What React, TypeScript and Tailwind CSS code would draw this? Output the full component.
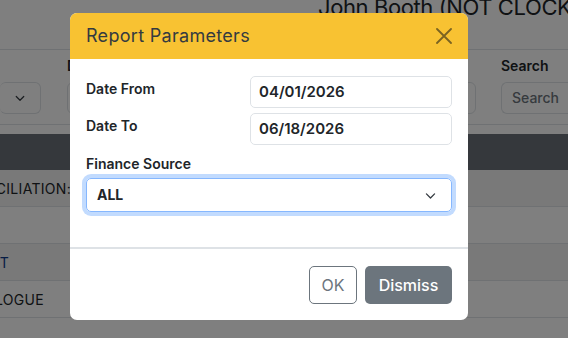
import React from "react";

const font = { fontFamily: "Inter, 'Noto Sans', sans-serif" };

// Rows of the report table behind the modal
const rows = [
  { text: "RECONCILIATION:", w: "w-[71px]", link: false, striped: true },
  { text: "", w: "w-[71px]", link: false, striped: false },
  { text: "STATEMENT", w: "w-[9px]", link: true, striped: true },
  { text: "CATALOGUE", w: "w-[44px]", link: false, striped: false },
];

const Chevron = ({ className }: { className?: string }) => (
  <svg viewBox="0 0 16 16" className={className} fill="none" stroke="currentColor" strokeWidth="1.6" strokeLinecap="round" strokeLinejoin="round">
    <path d="M3 6l5 5 5-5" />
  </svg>
);

const App = () => {
  return (
    <main className="relative w-[568px] h-[338px] overflow-hidden bg-white text-[#212529]" style={font}>
      {/* PAGE BEHIND THE MODAL */}
      <div className="h-[50px] border-b border-[#dee2e6] pl-[318px] flex items-start">
        <h1 className="-mt-[7px] text-[22px] leading-[28px] tracking-[-0.4px] whitespace-nowrap">John Booth (NOT CLOCKED IN)</h1>
      </div>

      <div className="h-[75px] border-b border-[#dee2e6] flex items-start">
        <div className="w-[41px] pt-[32px]">
          <div className="h-8 border border-[#dee2e6] rounded-md border-l-0 flex items-center justify-end pr-[14px]">
            <Chevron className="w-[12px] h-[12px] text-[#343a40]" />
          </div>
        </div>
        <div className="ml-[26px] w-[409px] pt-[6px]">
          <div className="text-sm font-semibold leading-5">Date</div>
          <div className="mt-[6px] h-8 border border-[#dee2e6] rounded-md" />
        </div>
        <div className="ml-[25px] flex-1 pt-[6px]">
          <div className="text-sm font-semibold leading-5">Search</div>
          <div className="mt-[6px] h-8 border border-[#dee2e6] border-r-0 rounded-l-md flex items-center pl-[10px] text-sm font-medium text-[#6c757d]">
            Search
          </div>
        </div>
      </div>

      <div className="mt-[9px] h-[36px] bg-[#6a7078]" />

      <div>
        {rows.map((r, i) => (
          <div
            key={i}
            className={`h-[37px] border-b border-[#dee2e6] flex items-center ${r.striped ? "bg-[#f2f2f2]" : "bg-white"}`}
          >
            <div className={`${r.w} overflow-hidden whitespace-nowrap flex justify-end text-[14px] tracking-[0.3px]`}>
              <span className={r.link ? "text-[#0d3a8a]" : "text-[#212529]"}>{r.text}</span>
            </div>
          </div>
        ))}
      </div>

      {/* OVERLAY + MODAL */}
      <div className="absolute inset-0 bg-black/50 pt-[13px] pl-[70px]">
        <div className="w-[398px] bg-white rounded-[7px] overflow-hidden">
          <div className="h-[46px] bg-[#f8c232] flex items-center justify-between pl-4 pr-4">
            <h2 className="text-[18px] leading-6 text-[#343a40] tracking-[0.3px]">Report Parameters</h2>
            <svg viewBox="0 0 16 16" className="w-4 h-4 text-[#7a6322]" fill="none" stroke="currentColor" strokeWidth="1.8" strokeLinecap="round">
              <path d="M1 1l14 14M15 1L1 15" />
            </svg>
          </div>

          <div className="px-4 pt-[17px] pb-[35px]">
            <div className="grid grid-cols-[164px_1fr] gap-y-[5px]">
              <label className="text-sm font-semibold leading-5 pt-[3px]">Date From</label>
              <div className="h-8 border border-[#dee2e6] rounded-[5px] flex items-center pl-2 text-[15px] font-semibold">04/01/2026</div>
              <label className="text-sm font-semibold leading-5 pt-[3px]">Date To</label>
              <div className="h-8 border border-[#dee2e6] rounded-[5px] flex items-center pl-2 text-[15px] font-semibold">06/18/2026</div>
            </div>
            <label className="block mt-[9px] text-sm font-semibold leading-5">Finance Source</label>
            <div className="mt-[4px] h-[34px] border border-[#86b7fe] rounded-[5px] shadow-[0_0_0_4px_rgba(13,110,253,0.25)] flex items-center justify-between pl-[10px] pr-[14px] text-sm font-bold">
              ALL
              <Chevron className="w-[13px] h-[13px] text-[#343a40]" />
            </div>
          </div>

          <div className="h-[2px] bg-[#dee2e6]" />

          <div className="px-4 pt-[17px] pb-4 flex justify-end gap-2">
            <button className="h-[38px] w-[48px] border border-[#6c757d] rounded-[5px] text-base text-[#6c757d]">OK</button>
            <button className="h-[38px] w-[87px] bg-[#6c757d] rounded-[5px] text-base font-medium text-white">Dismiss</button>
          </div>
        </div>
      </div>
    </main>
  );
};

export default App;
